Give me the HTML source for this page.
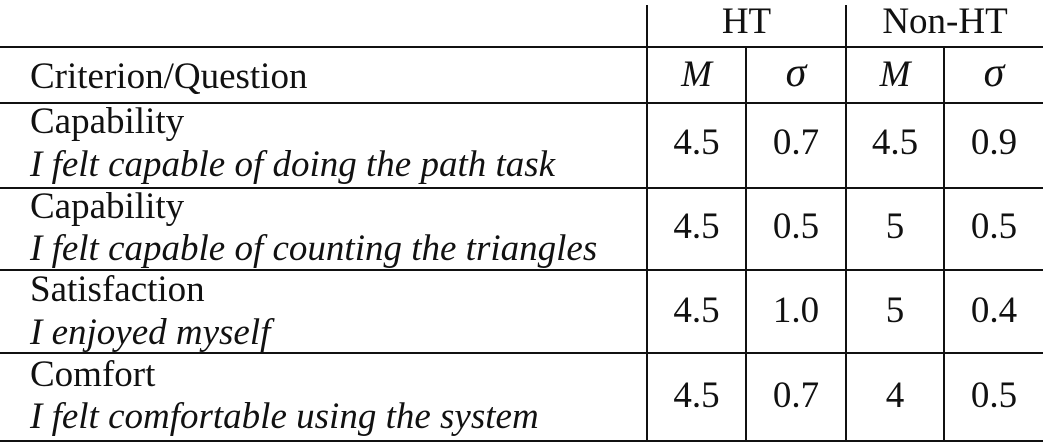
<!DOCTYPE html>
<html><head><style>
body{margin:0;width:1047px;height:445px;background:#fff;position:relative;overflow:hidden;font-family:"Liberation Serif",serif;font-size:37px;color:#111}
.h{position:absolute;left:0;width:1043px;height:2px;background:#111}
.v{position:absolute;width:2px;background:#111}
.t{position:absolute;line-height:36px;white-space:nowrap}
.c{position:absolute;line-height:36px;text-align:center}
i{font-style:italic}
.s{font-size:42px;font-style:italic}
</style></head><body>
<div class="h" style="top:46px"></div>
<div class="h" style="top:102px"></div>
<div class="h" style="top:187px"></div>
<div class="h" style="top:269px"></div>
<div class="h" style="top:352px"></div>
<div class="h" style="top:440px"></div>
<div class="v" style="left:646px;top:5px;height:437px"></div>
<div class="v" style="left:845px;top:5px;height:437px"></div>
<div class="v" style="left:745px;top:47px;height:395px"></div>
<div class="v" style="left:943px;top:47px;height:395px"></div>

<div class="c" style="left:648px;width:197px;top:4px">HT</div>
<div class="c" style="left:847px;width:196px;top:4px">Non-HT</div>
<div class="t" style="left:30px;top:59px">Criterion/Question</div>
<div class="c" style="left:648px;width:97px;top:57px"><i>M</i></div>
<div class="c" style="left:747px;width:98px;top:55px"><span class="s">σ</span></div>
<div class="c" style="left:847px;width:96px;top:57px"><i>M</i></div>
<div class="c" style="left:945px;width:98px;top:55px"><span class="s">σ</span></div>

<div class="t" style="left:30px;top:104px">Capability</div>
<div class="t" style="left:30px;top:147px"><i>I felt capable of doing the path task</i></div>
<div class="c" style="left:648px;width:97px;top:125px">4.5</div>
<div class="c" style="left:747px;width:98px;top:125px">0.7</div>
<div class="c" style="left:847px;width:96px;top:125px">4.5</div>
<div class="c" style="left:945px;width:98px;top:125px">0.9</div>

<div class="t" style="left:30px;top:189px">Capability</div>
<div class="t" style="left:30px;top:231px"><i>I felt capable of counting the triangles</i></div>
<div class="c" style="left:648px;width:97px;top:209px">4.5</div>
<div class="c" style="left:747px;width:98px;top:209px">0.5</div>
<div class="c" style="left:847px;width:96px;top:209px">5</div>
<div class="c" style="left:945px;width:98px;top:209px">0.5</div>

<div class="t" style="left:30px;top:272px">Satisfaction</div>
<div class="t" style="left:30px;top:315px"><i>I enjoyed myself</i></div>
<div class="c" style="left:648px;width:97px;top:293px">4.5</div>
<div class="c" style="left:747px;width:98px;top:293px">1.0</div>
<div class="c" style="left:847px;width:96px;top:293px">5</div>
<div class="c" style="left:945px;width:98px;top:293px">0.4</div>

<div class="t" style="left:30px;top:357px">Comfort</div>
<div class="t" style="left:30px;top:399px"><i>I felt comfortable using the system</i></div>
<div class="c" style="left:648px;width:97px;top:378px">4.5</div>
<div class="c" style="left:747px;width:98px;top:378px">0.7</div>
<div class="c" style="left:847px;width:96px;top:378px">4</div>
<div class="c" style="left:945px;width:98px;top:378px">0.5</div>
</body></html>
